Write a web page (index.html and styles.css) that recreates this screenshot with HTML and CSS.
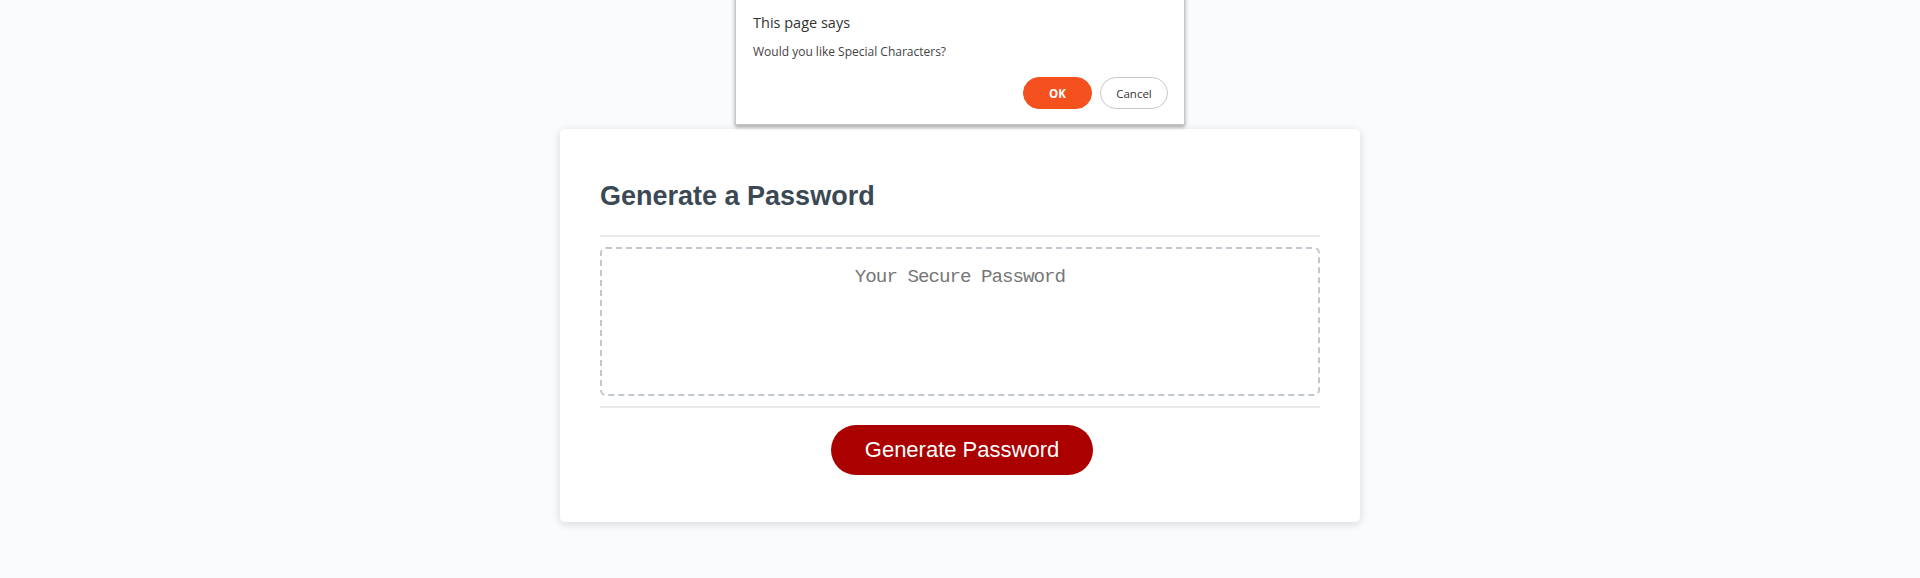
FILE: index.html
```html
<!DOCTYPE html>
<html lang="en">
<head>
<meta charset="UTF-8">
<title>Password Generator</title>
<link rel="stylesheet" href="styles.css">
</head>
<body>
<div class="wrapper">
  <div class="card">
    <div class="card-header"><h2>Generate a Password</h2></div>
    <div class="card-body">
      <textarea readonly id="password" class="password" placeholder="Your Secure Password" aria-label="Generated Password"></textarea>
    </div>
    <div class="card-footer">
      <button id="generate" class="btn">Generate Password</button>
    </div>
  </div>
</div>
<div class="dialog" role="dialog">
  <div class="dialog-title">This page says</div>
  <div class="dialog-message">Would you like Special Characters?</div>
  <div class="dialog-actions">
    <button class="dlg-btn dlg-ok">OK</button>
    <button class="dlg-btn dlg-cancel">Cancel</button>
  </div>
</div>
</body>
</html>
```
FILE: styles.css
```css
*, *::before, *::after { box-sizing: border-box; }

html, body, .wrapper { height: 100%; margin: 0; padding: 0; }

body {
  font-family: "Liberation Sans", Arial, sans-serif;
  background-color: #f9fbfd;
}

.wrapper {
  padding-top: 129px;
  padding-left: 20px;
  padding-right: 20px;
}

.card {
  background-color: #fff;
  border-radius: 5px;
  box-shadow: rgba(0, 0, 0, 0.15) 0px 2px 8px 0px;
  color: hsl(206, 17%, 28%);
  font-size: 18px;
  margin: 0 auto;
  max-width: 800px;
  padding: 30px 40px;
}

.card-header h2 {
  font-size: 27px;
  line-height: 31px;
  margin: 22px 0 23px;
}

.card-header::after {
  content: " ";
  display: block;
  width: 100%;
  background: #e7e9eb;
  height: 2px;
}

.card-body { min-height: 100px; }

.password {
  appearance: none;
  display: block;
  width: 100%;
  height: 149px;
  padding: 17px 15px 85px;
  font-family: "Liberation Mono", monospace;
  font-size: 19.2px;
  letter-spacing: -1px;
  line-height: 22.5px;
  text-align: center;
  margin: 10px 0;
  border: 2px dashed #c0c7cf;
  border-radius: 6px;
  resize: none;
  overflow: hidden;
  background: #fff;
}

.password::placeholder { color: #777; }

.card-footer { text-align: center; }

.card-footer::before {
  content: " ";
  display: block;
  width: 100%;
  background: #e7e9eb;
  height: 2px;
}

.btn {
  border: none;
  background-color: #aa0000;
  border-radius: 25px;
  color: #fff;
  display: inline-block;
  font-family: "Liberation Sans", Arial, sans-serif;
  font-size: 22px;
  line-height: 22px;
  margin: 17px 16px 17px 20px;
  padding: 14px 34px;
  text-align: center;
  cursor: pointer;
}

.dialog {
  position: absolute;
  left: 735px;
  top: -10px;
  width: 450px;
  height: 135px;
  background: #fff;
  border: 1px solid #c8c8c8;
  box-shadow: 0 2px 4px rgba(0, 0, 0, 0.35);
  padding: 22px 16px 0 17px;
  font-family: "Open Sans", "Noto Sans", sans-serif;
}

.dialog-title {
  font-size: 14.5px;
  line-height: 20px;
  color: #333;
}

.dialog-message {
  margin-top: 11px;
  font-size: 12px;
  line-height: 16px;
  color: #444;
}

.dialog-actions {
  display: flex;
  justify-content: flex-end;
  gap: 8px;
  margin-top: 17px;
}

.dlg-btn {
  height: 32px;
  border-radius: 16px;
  font-family: "Open Sans", "Noto Sans", sans-serif;
  font-size: 11.5px;
  padding: 0;
  cursor: pointer;
}

.dlg-ok {
  width: 69px;
  background: #f4511e;
  border: 1px solid #f4511e;
  color: #fff;
  font-weight: 700;
}

.dlg-cancel {
  width: 68px;
  background: #fff;
  border: 1px solid #c9c9c9;
  color: #333;
}
```
